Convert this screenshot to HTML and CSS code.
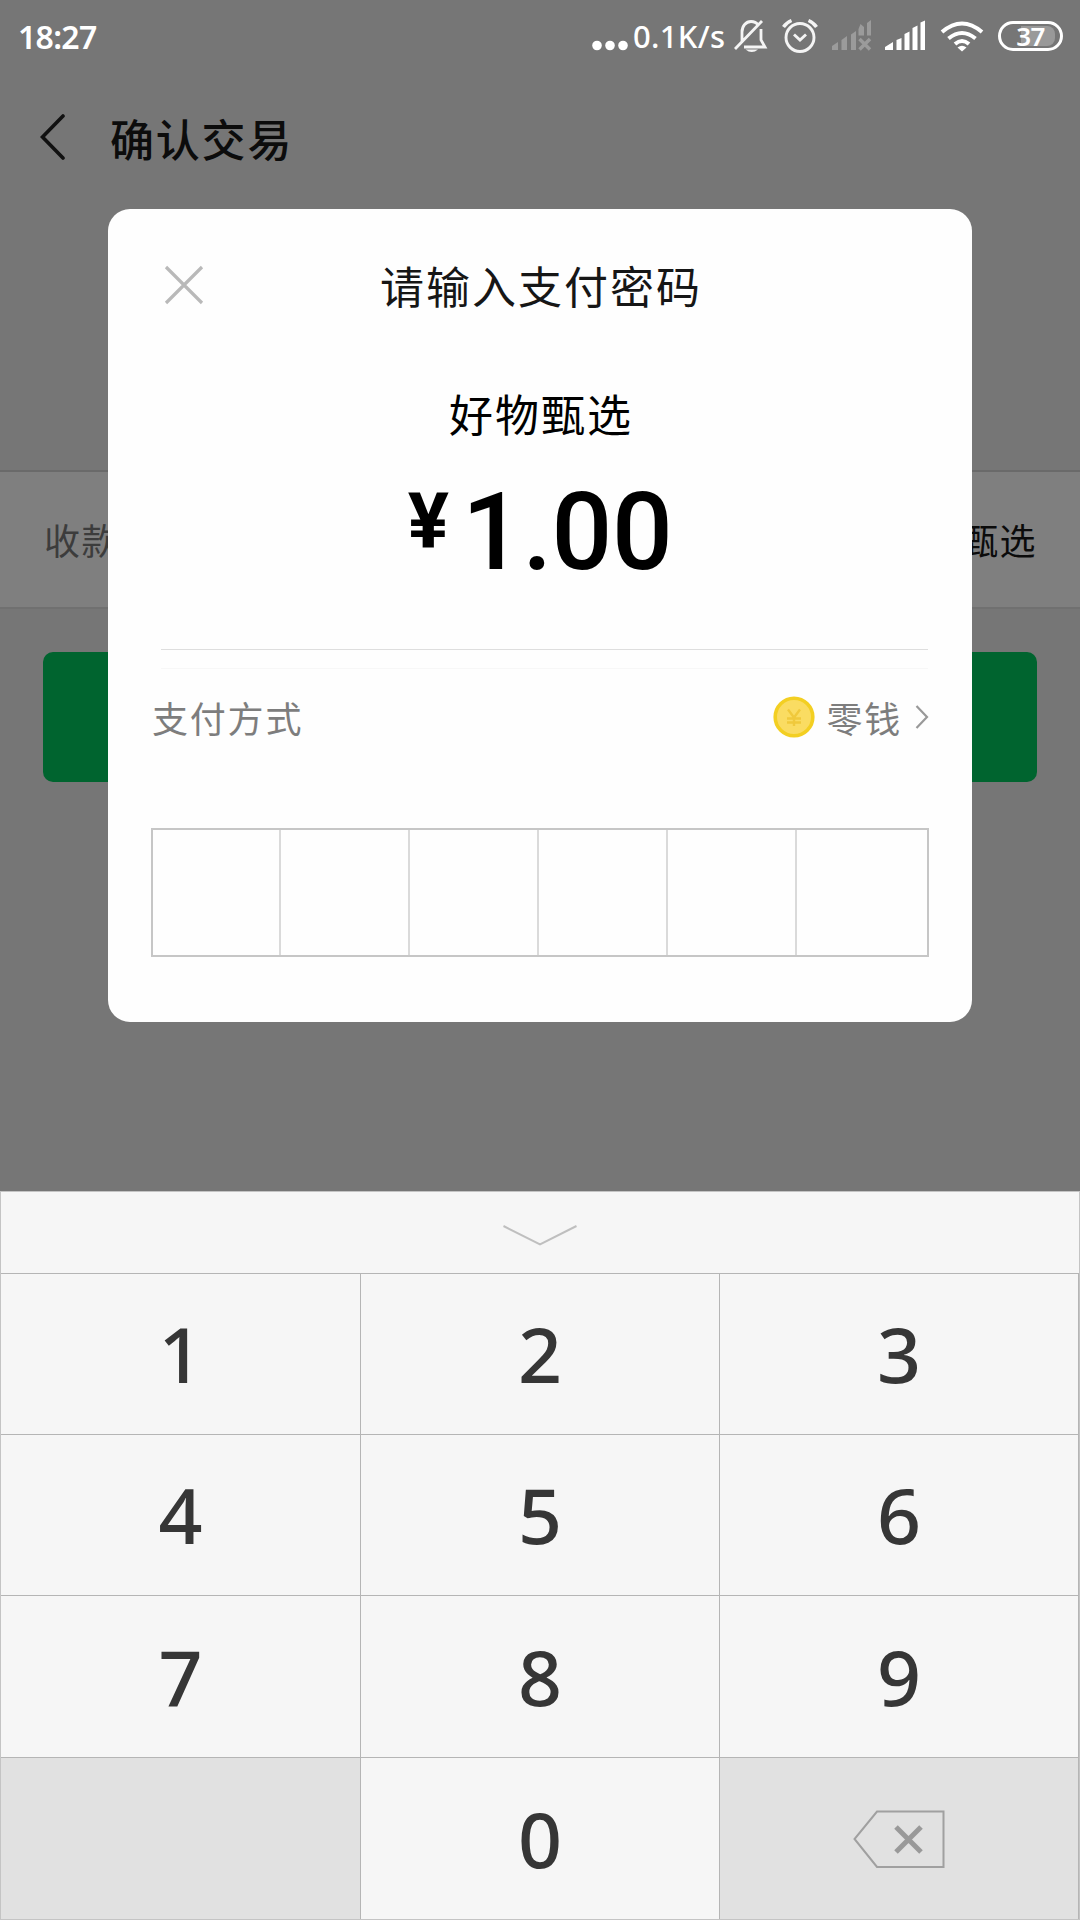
FILE: index.html
```html
<!DOCTYPE html>
<html lang="zh-CN">
<head>
<meta charset="utf-8">
<title>确认交易</title>
<link rel="stylesheet" href="styles.css">
</head>
<body>
<div class="screen">
  <header class="status">
    <span class="clock">18:27</span>
    <div class="indicators">
      <svg class="dots" width="36" height="12" viewBox="592 40 36 12"><g fill="#fff"><circle cx="597" cy="45.5" r="4.8"/><circle cx="610" cy="45.5" r="4.8"/><circle cx="623" cy="45.5" r="4.8"/></g></svg>
      <span class="speed">0.1K/s</span>
      <svg class="bell" width="34" height="36" viewBox="734 18 34 36" fill="none" stroke="#f4f4f4" stroke-width="2.8"><path d="M742 41V32c0-6 4-10.500 9-10.500 3 0 5.500 1.200 7 3.500M761 29v11l4 7H744M735 49l27-28"/><path d="M745.500 49.500h12.500q-6.200 5-12.500 0z" fill="#f4f4f4" stroke="none"/></svg>
      <svg class="alarm" width="36" height="36" viewBox="782 18 36 36" fill="none" stroke="#f4f4f4" stroke-width="2.900"><circle cx="800" cy="37.500" r="14"/><path d="M794 34.500l6 5.500 6-5.500"/><path d="M783.500 27q3-4.500 8-6.500M816.500 27q-3-4.500-8-6.500" stroke-width="3.500"/></svg>
      <svg class="signal signal-off" width="41" height="32" viewBox="831 19 41 32"><g fill="#9b9b9b"><path d="M832 50v-4l6-4v8zM841.500 40l5.500-4v14h-5.500zM851 34.500l5-3.500v19h-5zM858.500 35.500V29l2-5 3.500 3v8.500zM867 35.500V23l4-3v15.500z"/><path d="M859.500 39l10.500 10.500M870 39l-10.500 10.500" stroke="#9b9b9b" stroke-width="3.500"/></g></svg>
      <svg class="signal" width="42" height="32" viewBox="884 19 42 32"><path fill="#fff" d="M885 50v-3l8-5v8zM896.500 40l5-2v12h-5zM904.500 34l5-2.500V50h-5zM912.500 28l5-2.500V50h-5zM920.500 22.500l4.500-2V50h-4.500z"/></svg>
      <svg class="wifi" width="44" height="32" viewBox="940 20 44 32" fill="none" stroke="#fff" stroke-width="4"><path d="M942 32q20-17 40 0M948.500 38.500q13.500-11 27 0M955 44q7-6 14 0"/><path d="M957.500 47.500q4.500-3.500 9 0l-4.500 4z" fill="#fff" stroke="none"/></svg>
      <div class="battery"><span>37</span></div>
    </div>
  </header>

  <nav class="navbar">
    <svg width="26" height="48" viewBox="40 113 26 48"><path d="M63 116L42.500 137l20.500 21" fill="none" stroke="#111" stroke-width="3.600" stroke-linecap="round"/></svg>
    <h1>确认交易</h1>
  </nav>

  <section class="payee">
    <span class="payee-label">收款方</span>
    <span class="payee-name">好物甄选</span>
  </section>
  <div class="pay-button"></div>

  <div class="dialog">
    <div class="dialog-head">
      <svg width="40" height="40" viewBox="0 0 40 40"><path d="M2 2l36 36M38 2L2 38" stroke="#b9b9b9" stroke-width="3.200"/></svg>
      <h2>请输入支付密码</h2>
    </div>
    <div class="merchant">好物甄选</div>
    <div class="amount"><span class="currency">¥</span><span class="figure">1.00</span></div>
    <div class="divider"></div>
    <div class="method">
      <span class="method-label">支付方式</span>
      <svg class="coin" width="42" height="42" viewBox="0 0 42 42"><circle cx="21" cy="21" r="18.800" fill="#fadc62" stroke="#f3cf22" stroke-width="3.600"/><path d="M15 13.500l6 8 6-8M14 22.500h14M14 26.500h14M21 21.500V30" fill="none" stroke="#f0c93c" stroke-width="2.400"/></svg>
      <span class="method-name">零钱</span>
      <svg class="more" width="14" height="26" viewBox="0 0 14 26"><path d="M1.500 2l10.500 11-10.500 11" fill="none" stroke="#999" stroke-width="2.200"/></svg>
    </div>
    <div class="password"><i></i><i></i><i></i><i></i><i></i><i></i></div>
  </div>

  <div class="keyboard">
    <div class="collapse"><svg width="76" height="24" viewBox="0 0 76 24"><path d="M1.500 2L38 20.500 74.500 2" fill="none" stroke="#bfbfbf" stroke-width="2"/></svg></div>
    <div class="keys">
      <b>1</b><b>2</b><b>3</b>
      <b>4</b><b>5</b><b>6</b>
      <b>7</b><b>8</b><b>9</b>
      <b class="muted"></b><b>0</b>
      <b class="muted"><svg width="92" height="58" viewBox="854 1809 92 58" fill="none"><path d="M878 1810.500h66.500v55.500H878l-22.500-28z" stroke="#a0a0a0" stroke-width="2"/><path d="M897 1826l25 25M922 1826l-25 25" stroke="#999" stroke-width="5"/></svg></b>
    </div>
  </div>
</div>
</body>
</html>
```
FILE: styles.css
```css
* { box-sizing: border-box; }
body { margin: 0; }
.screen {
  position: relative;
  width: 1080px;
  height: 1920px;
  overflow: hidden;
  background: #767676;
  font-family: "Noto Sans CJK SC", sans-serif;
  color: #000;
}

/* status bar */
.status {
  height: 72px;
  padding: 0 17px 0 18px;
  display: flex;
  align-items: center;
  justify-content: space-between;
  color: #fff;
  font-family: "Noto Sans", sans-serif;
}
.clock { margin-top: 2px; font-size: 32px; font-weight: 600; line-height: 72px; letter-spacing: -0.7px; }
.indicators { display: flex; align-items: center; }
.dots { margin: 20px 5px 0 0; }
.speed { width: 92px; font-size: 31px; font-weight: 500; line-height: 72px; letter-spacing: 0.3px; white-space: nowrap; margin-right: 9px; }
.bell { margin-right: 14px; }
.alarm { margin-right: 13px; }
.signal { margin-right: 14px; margin-top: -2px; }
.signal-off { margin-right: 12px; }
.wifi { margin-right: 14px; }
.battery {
  width: 65px;
  height: 30px;
  border: 3px solid #fff;
  border-radius: 15px;
  padding: 2px 5px;
}
.battery span {
  display: block;
  height: 20px;
  border-radius: 8px;
  background: linear-gradient(90deg, transparent 30%, #999 30%);
  font-size: 26px;
  line-height: 20px;
  font-weight: 600;
  letter-spacing: -0.5px;
  text-align: center;
}

/* page behind the dialog */
.navbar { height: 128px; margin-bottom: 270px; padding-left: 40px; display: flex; align-items: center; gap: 44px; }
.navbar svg { margin-top: 2px; }
.navbar h1 { margin: 4px 0 0; font-size: 44px; font-weight: 500; letter-spacing: 1.8px; line-height: 60px; color: #0c0c0c; }
.payee {
  height: 139px;
  padding: 0 43px 2px 44px;
  display: flex;
  align-items: center;
  justify-content: space-between;
  border-top: 2px solid #6a6a6a;
  border-bottom: 2px solid #707070;
  background: #7f7f7f;
  font-size: 36px;
  letter-spacing: 1.5px;
}
.payee-label { color: #3c3c3c; }
.payee-name { color: #0b0b0b; }
.pay-button { margin: 43px 43px 0; height: 130px; border-radius: 10px; background: #00642f; }

/* dialog */
.dialog {
  position: absolute;
  left: 108px;
  top: 209px;
  width: 864px;
  height: 813px;
  padding: 43px 43px 0;
  border-radius: 22px;
  background: #fefefe;
}
.dialog-head { display: grid; grid-template-columns: 40px 1fr 40px; align-items: center; height: 66px; padding: 0 13px; }
.dialog h2 { margin: 0; padding-left: 2px; font-size: 44px; font-weight: 400; line-height: 60px; letter-spacing: 2px; text-align: center; color: #161616; }
.merchant { margin-top: 63px; padding-left: 2px; line-height: 64px; font-size: 44px; letter-spacing: 2px; text-align: center; }
.amount {
  height: 128px;
  margin-top: 21px;
  display: flex;
  justify-content: center;
  align-items: flex-start;
  gap: 13px;
  font-family: Roboto, sans-serif;
  font-weight: 500;
}
.currency { margin-top: 6px; font-size: 77px; line-height: 100px; font-weight: 700; }
.figure { margin-top: 3px; font-size: 107px; line-height: 128px; letter-spacing: -0.5px; }
.divider { height: 20px; margin: 55px 1px 0 10px; border-top: 1px solid #dedede; border-bottom: 1px solid #f7f7f7; }
.method { height: 97px; padding: 0 0 2px 1px; display: flex; align-items: center; font-size: 36px; letter-spacing: 1.8px; color: #7d7d7d; }
.method-label { flex: 1; }
.coin { margin-right: 11px; }
.method-name { margin-right: 13px; }
.password { margin-top: 62px; height: 129px; display: grid; grid-template-columns: 126px repeat(4, 129px) 1fr; border: 2px solid #c6c6c6; }
.password i + i { border-left: 2px solid #dadada; }

/* number pad */
.keyboard { position: absolute; left: 0; right: 0; top: 1191px; bottom: 0; background: #f6f6f6; border: 1px solid #c4c4c4; }
.collapse { height: 81px; display: flex; justify-content: center; padding-top: 32px; }
.keys { display: grid; grid-template-columns: 360px 359px 359px; grid-template-rows: 161px 161px 162px 162px; }
.keys b {
  display: flex;
  align-items: center;
  justify-content: center;
  border-top: 1px solid #b5b5b5;
  border-right: 1px solid #b5b5b5;
  font-family: "Noto Sans", sans-serif;
  font-size: 77px;
  font-weight: 500;
  line-height: 100px;
  color: #363636;
}
.keys .muted { background: #e1e1e1; }
```
